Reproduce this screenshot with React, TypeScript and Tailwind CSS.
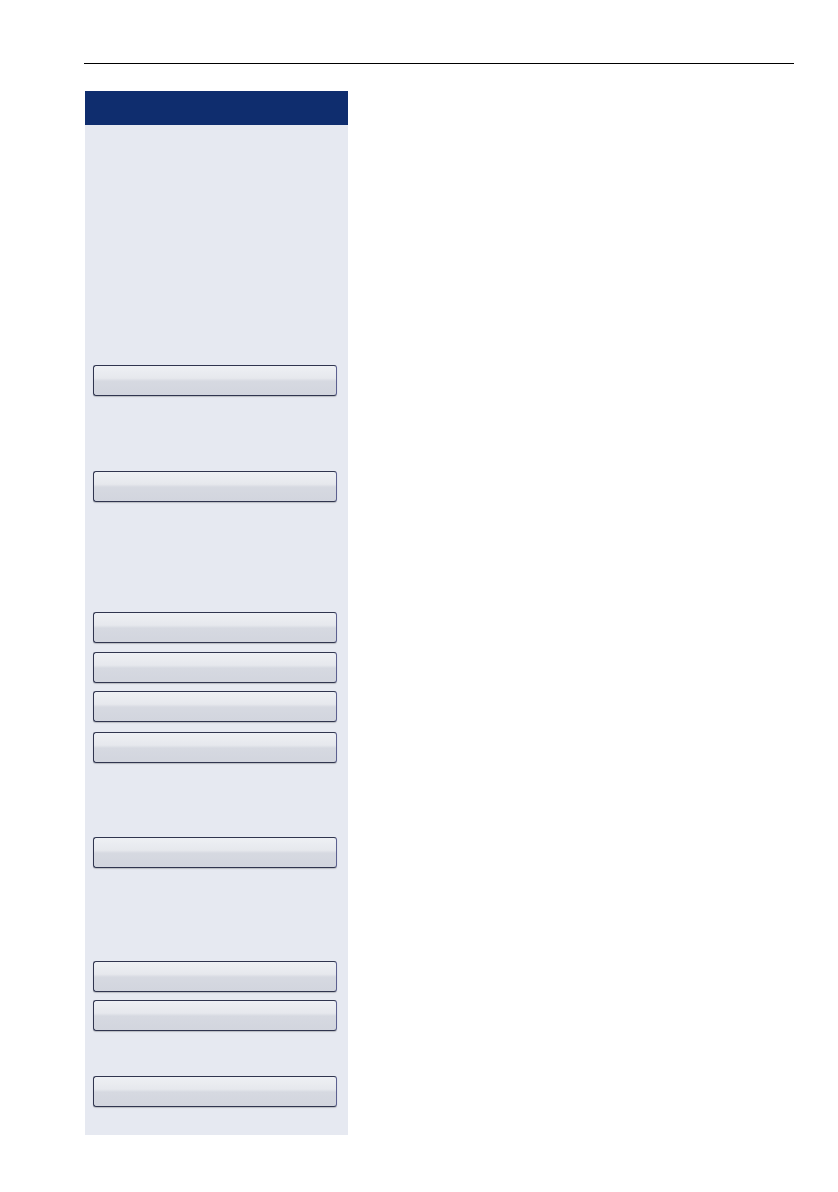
const gaps = [
  "mt-[240px]",
  "mt-[75px]",
  "mt-[110px]",
  "mt-[9px]",
  "mt-[8px]",
  "mt-[10px]",
  "mt-[74px]",
  "mt-[93px]",
  "mt-[8px]",
  "mt-[45px]",
];

function KeyButton({ gap }: { gap: string }) {
  return (
    <button
      type="button"
      className={`${gap} block h-[31px] w-[244px] rounded-[3px] border border-[#30354f] border-r-[#5c6090] bg-[linear-gradient(to_bottom,#eef0f4_0%,#e6e8ed_42%,#d6d9e1_52%,#d2d5de_100%)] shadow-[0_1px_1px_rgba(0,0,0,0.2)]`}
    />
  );
}

export default function App() {
  return (
    <div className="min-h-[1192px] w-[838px] bg-white font-['Liberation_Sans',sans-serif]">
      <div className="pt-[63px] pl-[84px]">
        <div className="h-px w-[710px] bg-black" />
      </div>

      <div className="ml-[85px] mt-[27px] w-[263px] bg-[#e6e9f1] pb-[28px]">
        {/* title bar */}
        <div className="h-[34px] bg-[#0f2d6e]" />

        <div className="flex flex-col pl-[8px]">
          {gaps.map((g, i) => (
            <KeyButton key={i} gap={g} />
          ))}
        </div>
      </div>
    </div>
  );
}
